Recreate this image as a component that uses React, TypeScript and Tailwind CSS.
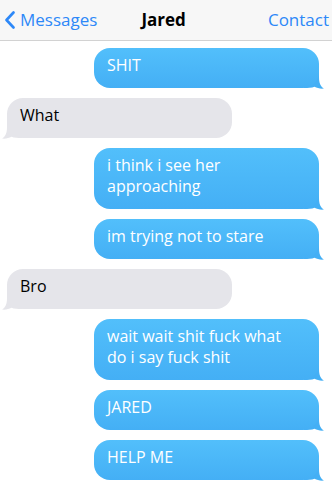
import React from "react";

type Msg = { text: string; me: boolean };

const messages: Msg[] = [
  { text: "SHIT", me: true },
  { text: "What", me: false },
  { text: "i think i see her approaching", me: true },
  { text: "im trying not to stare", me: true },
  { text: "Bro", me: false },
  { text: "wait wait shit fuck what do i say fuck shit", me: true },
  { text: "JARED", me: true },
  { text: "HELP ME", me: true },
];

function Tail({ me }: { me: boolean }) {
  if (me) {
    return (
      <svg
        className="absolute right-[-5px] bottom-[-1px]"
        width="20"
        height="20"
        viewBox="0 0 20 20"
      >
        <path
          d="M15 0 L15 8 C15 14 16.5 17.5 20 19.5 C16.5 20 13 19 10.5 17.8 C8 19 4 19 0 19 L0 0 Z"
          fill="#44aff5"
        />
      </svg>
    );
  }
  return (
    <svg
      className="absolute left-[-5px] bottom-[-1px]"
      width="20"
      height="20"
      viewBox="0 0 20 20"
    >
      <path
        d="M5 0 L5 8 C5 14 3.5 17.5 0 19.5 C3.5 20 7 19 9.5 17.8 C12 19 16 19 20 19 L20 0 Z"
        fill="#e5e5ea"
      />
    </svg>
  );
}

function Bubble({ m }: { m: Msg }) {
  if (m.me) {
    return (
      <div className="relative self-end mr-[13px] w-[225px]">
        <div className="relative z-10 rounded-[16px] bg-gradient-to-b from-[#52bffb] to-[#44aff5] pl-[13px] pr-[24px] pt-[7px] pb-[12px] text-[16px] leading-[21px] text-white">
          {m.text}
        </div>
        <Tail me />
      </div>
    );
  }
  return (
    <div className="relative self-start ml-[7px] w-[225px]">
      <div className="relative z-10 rounded-[16px] bg-[#e5e5ea] pl-[13px] pr-[24px] pt-[7px] pb-[12px] text-[16px] leading-[21px] text-black">
        {m.text}
      </div>
      <Tail me={false} />
    </div>
  );
}

export default function App() {
  return (
    <div
      className="w-[332px] h-[483px] overflow-hidden bg-white"
      style={{ fontFamily: '"Open Sans", "Noto Sans", sans-serif' }}
    >
      <div className="flex h-[41px] items-center border-b border-[#d2d2d2] bg-[#f7f7f7] text-[17px] leading-[22px]">
        <div className="flex items-center pl-[4px] text-[#2d88f8]">
          <svg width="12" height="18" viewBox="0 0 12 18" className="mr-[4px]">
            <path
              d="M9.5 1.5 L2.5 9 L9.5 16.5"
              fill="none"
              stroke="#2d88f8"
              strokeWidth="2.6"
              strokeLinecap="round"
              strokeLinejoin="round"
            />
          </svg>
          <span>Messages</span>
        </div>
        <div className="ml-[44px] font-bold text-black">Jared</div>
        <div className="ml-auto pr-[3px] text-[#2d88f8]">Contact</div>
      </div>
      <div className="flex flex-col gap-[10px] pt-[7px]">
        {messages.map((m, i) => (
          <Bubble key={i} m={m} />
        ))}
      </div>
    </div>
  );
}
